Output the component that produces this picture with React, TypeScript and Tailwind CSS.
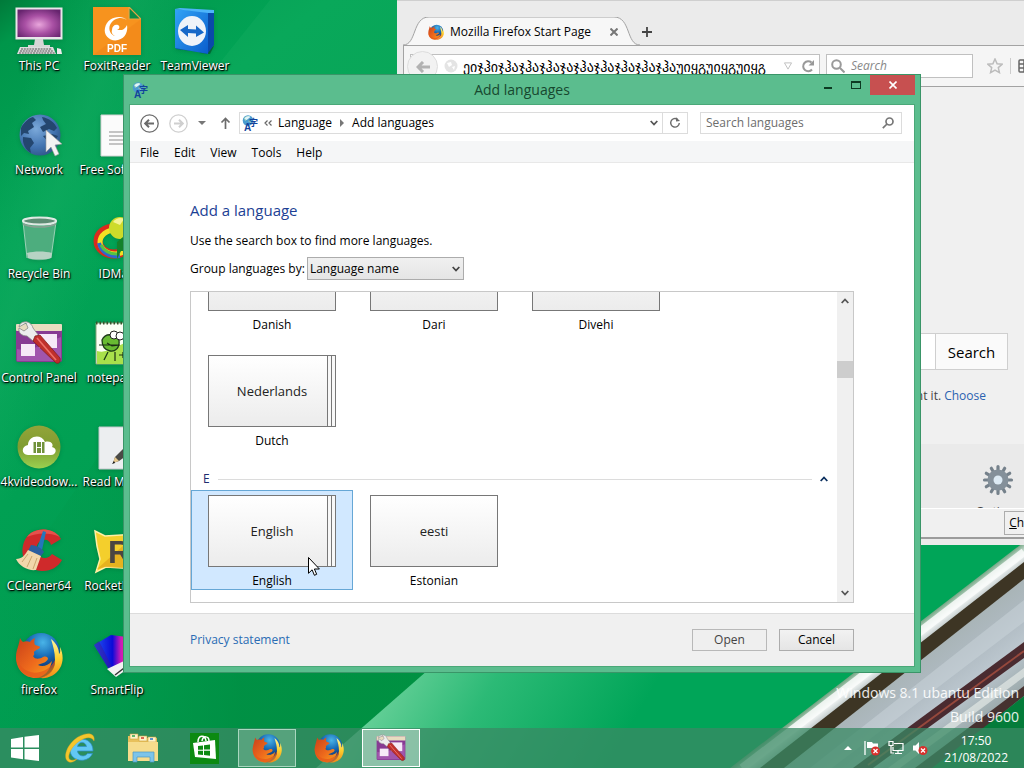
import React from "react";

type IconProps = { className?: string };

function FirefoxIcon({ className }: IconProps) {
  return (
    <svg viewBox="0 0 48 48" className={className} aria-hidden="true">
      <defs>
        <radialGradient id="fxGlobe" cx="55%" cy="25%" r="70%">
          <stop offset="0" stopColor="#49b4e8" />
          <stop offset="0.55" stopColor="#1769b4" />
          <stop offset="1" stopColor="#12336e" />
        </radialGradient>
        <linearGradient id="fxFox" x1="0" y1="0" x2="1" y2="1">
          <stop offset="0" stopColor="#c8401a" />
          <stop offset="0.55" stopColor="#ee6a1c" />
          <stop offset="1" stopColor="#f8a41c" />
        </linearGradient>
        <linearGradient id="fxTail" x1="0" y1="0" x2="0" y2="1">
          <stop offset="0" stopColor="#fff6a0" />
          <stop offset="0.5" stopColor="#ffcf2e" />
          <stop offset="1" stopColor="#f08a1a" />
        </linearGradient>
      </defs>
      <circle cx="26" cy="21" r="19" fill="url(#fxGlobe)" />
      <path d="M36 8c5 4 8 9 8 15 2-2 1-5 1-7 3 6 4 14 0 21-4 7-12 11-20 10 10-3 15-9 15-18 0-8-2-14-4-21z" fill="url(#fxTail)" />
      <path d="M5 7c1 2 2 3 3 4 2-1 5-1 7 0 1-2 3-3 5-4-1 3-1 5 0 7 2 1 5 1 5 2 0 2-5 3-6 5 0 2 1 3-1 4 2 4 7 3 10 1 3-1 5 0 5 2-2 4-6 4-10 6 4 2 10 1 14-4-2 10-8 16-16 17C9 47 1 38 1 26 1 19 4 15 5 7z" fill="url(#fxFox)" />
      <path d="M1 24c2 12 12 20 24 17 7-2 12-6 15-12 1 10-7 18-17 18C10 47 1 38 1 24z" fill="#e4571a" opacity="0.7" />
    </svg>
  );
}

function ControlPanelIcon({ className }: IconProps) {
  return (
    <svg viewBox="0 0 48 48" className={className} aria-hidden="true">
      <rect x="1" y="5" width="46" height="38" rx="2" fill="#873b93" />
      <rect x="1" y="5" width="46" height="7" rx="1" fill="#e8dcc0" />
      <path d="M2 30C15 34 35 22 46 18V42H2z" fill="#a155ad" />
      <rect x="24" y="15" width="18" height="14" fill="#f6e9f7" />
      <rect x="6" y="25" width="14" height="12" fill="#f6e9f7" />
      <path d="M4 8c0-3 3-5 5-5 4-1 8 2 9 6l6 8-6 5-6-5C7 17 3 14 4 9l5 3 4-3-2-5z" fill="#ededed" stroke="#888" strokeWidth="0.8" />
      <path d="M20 17l5-1 20 23c1 4-1 6-4 5L18 22z" fill="#c02f2c" stroke="#7c1c1a" strokeWidth="0.7" />
      <path d="M22 19l19 22" stroke="#ee7069" strokeWidth="1.6" />
    </svg>
  );
}

function LanguageIcon({ className }: IconProps) {
  return (
    <svg viewBox="0 0 16 16" className={className} aria-hidden="true">
      <circle cx="6" cy="5.500" r="5.300" fill="#4a9bd0" />
      <path d="M2 3c2-2 4-2 6-2L6 4 3 6zM6 6l3-1v3z" fill="#9ad6b8" />
      <path d="M2.500 3.500C4 1 7 .5 8.500 2L4.500 5z" fill="#e2f4fb" />
      <text x="2" y="15.500" fontFamily="'Liberation Sans', sans-serif" fontSize="10" fontWeight="700" fill="#12439c">A</text>
      <text x="7" y="11" fontFamily="'Noto Sans CJK JP', sans-serif" fontSize="9" fontWeight="700" fill="#12439c">字</text>
    </svg>
  );
}

function PcIcon({ className }: IconProps) {
  return (
    <svg viewBox="0 0 48 48" className={className} aria-hidden="true">
      <defs>
        <radialGradient id="pcScreen" cx="50%" cy="55%" r="65%">
          <stop offset="0" stopColor="#e9a6dc" />
          <stop offset="0.5" stopColor="#a950a4" />
          <stop offset="1" stopColor="#66246e" />
        </radialGradient>
      </defs>
      <rect x="0.5" y="0.5" width="47" height="32" fill="#e9e6ea" />
      <rect x="2.500" y="2.500" width="43" height="27.500" fill="url(#pcScreen)" />
      <path d="M20 32h8l1 6h-10zM13 38h22v2H13z" fill="#d6d6d6" />
      <path d="M5 40h33l3 7H2z" fill="#dedede" />
      <path d="M6 42h31M5 44h33M4 46h36" stroke="#555" strokeWidth="1.100" strokeDasharray="2 0.8" />
      <path d="M42 41l4 1 1 5h-5z" fill="#ececec" />
    </svg>
  );
}

function FoxitIcon({ className }: IconProps) {
  return (
    <svg viewBox="0 0 48 48" className={className} aria-hidden="true">
      <path d="M0 0h36l12 12v36H0z" fill="#f7931e" />
      <path d="M0 48L48 12v36z" fill="#ef8416" opacity="0.5" />
      <path d="M36 0l12 12H36z" fill="#0b8c45" stroke="#e7a545" strokeWidth="1.200" />
      <path d="M34 13c-6-6-20-3-22 8-2 8 6 14 13 12 8-2 10-9 9-15-3 6-6 5-10 5 3-1 3-4 1-5-3-1-6 1-6 5-1 3 1 5 3 6-4-1-7-6-5-11 3-7 12-9 17-5z" fill="#fff" />
      <text x="14" y="44.500" fontFamily="'Liberation Sans', sans-serif" fontSize="10" fontWeight="700" fill="#fff">PDF</text>
    </svg>
  );
}

function TeamViewerIcon({ className }: IconProps) {
  return (
    <svg viewBox="0 0 48 48" className={className} aria-hidden="true">
      <defs>
        <linearGradient id="tvBox" x1="0" y1="0" x2="1" y2="1">
          <stop offset="0" stopColor="#31a4f6" />
          <stop offset="1" stopColor="#0a5dcc" />
        </linearGradient>
      </defs>
      <path d="M28 46l15-7-4 8z" fill="#04391c" opacity="0.5" />
      <path d="M5 5L37 5l6 1v32l-6 8L5 42z" fill="#0a4aa9" />
      <path d="M4 2l33 3v42L4 41z" fill="url(#tvBox)" />
      <path d="M4 2l5-1 34 2v3l-6 0z" fill="#4db4fa" />
      <ellipse cx="21" cy="24" rx="14" ry="15" fill="#eef3f9" />
      <path d="M9 23l8-5v4l8 .5v-4l8 7-8 4.500v-3.500l-8-.5v4z" fill="#1668c8" />
    </svg>
  );
}

function NetworkIcon({ className }: IconProps) {
  return (
    <svg viewBox="0 0 48 48" className={className} aria-hidden="true">
      <defs>
        <radialGradient id="netGlobe" cx="40%" cy="35%" r="75%">
          <stop offset="0" stopColor="#7ba9da" />
          <stop offset="0.6" stopColor="#4273b0" />
          <stop offset="1" stopColor="#2b5080" />
        </radialGradient>
      </defs>
      <circle cx="25" cy="24" r="20.500" fill="url(#netGlobe)" />
      <path d="M6 17c3-6 8-10 12-11l3 3-4 3 2 4-6 4 1 3-5-1-3 3zM8 26l8 1 3 5-4 5 1 5c-5-3-9-9-8-16zM27 6c7 1 13 6 15 11l-3 3-5-2-6 3-3-5 6-3-3-4zM28 25l9-2 6 2-5 8-5-2z" fill="#24466f" />
      <path d="M31 19v22l5-5 4 9 4-2-4-9 7-1z" fill="#f3f3f3" stroke="#999" strokeWidth="0.6" />
    </svg>
  );
}

function DocumentIcon({ className }: IconProps) {
  return (
    <svg viewBox="0 0 48 48" className={className} aria-hidden="true">
      <path d="M8 4h34v41H8z" fill="#fbfbfb" stroke="#d4d4d4" />
      <path d="M16 21h20M16 25h20M16 29h20M16 33h20" stroke="#8d8d8d" />
    </svg>
  );
}

function RecycleIcon({ className }: IconProps) {
  return (
    <svg viewBox="0 0 48 48" className={className} aria-hidden="true">
      <path d="M8 6l4 37c6 3 18 3 24 0l5-37z" fill="#6bb791" opacity="0.7" />
      <path d="M8 7l4 36M41 7l-5 36" stroke="#b6dcc8" strokeWidth="0.8" />
      <path d="M12 38c7-2 18-2 25 0l-1 5c-5 2-18 2-23 0z" fill="#b7d3c4" />
      <ellipse cx="24.500" cy="6" rx="16.500" ry="3.500" fill="#5d8c74" stroke="#dfe9e3" strokeWidth="2.200" />
      <path d="M8 9c8 4 25 4 33 0" stroke="#88a093" strokeWidth="1.500" fill="none" />
    </svg>
  );
}

function IdmIcon({ className }: IconProps) {
  return (
    <svg viewBox="0 0 48 48" className={className} aria-hidden="true">
      <ellipse cx="21" cy="26" rx="16" ry="13" fill="none" stroke="#d92b1c" strokeWidth="9" />
      <ellipse cx="22" cy="27" rx="15" ry="12" fill="none" stroke="#f5e023" strokeWidth="5" />
      <path d="M6 28c2 9 10 14 21 13" fill="none" stroke="#2e67cf" strokeWidth="4" />
      <path d="M8 30c3 6 9 9 16 9" fill="none" stroke="#57c242" strokeWidth="3" />
      <circle cx="27" cy="13" r="11" fill="#cddb2a" />
      <path d="M20 7c3-4 8-5 11-3l-4 6z" fill="#f4f394" />
      <path d="M24 27l6-5V12h14v24H28l-4 8z" fill="#14822b" />
    </svg>
  );
}

function NotepadIcon({ className }: IconProps) {
  return (
    <svg viewBox="0 0 48 48" className={className} aria-hidden="true">
      <path d="M3 4h30l9 8v33H3z" fill="#fbfff4" stroke="#8aa57c" />
      <path d="M4 32c14 4 26-12 38-9v22H4z" fill="#a9e04b" />
      <path d="M3 4h32" stroke="#37542c" strokeWidth="3" strokeDasharray="1.500 2" />
      <path d="M9 21c3-7 12-7 17 0 1 8-4 12-9 11-5-1-8-5-8-11zm6 12l-4 8" fill="#68bb32" stroke="#1d3b16" strokeWidth="1.300" />
      <circle cx="21" cy="16" r="4" fill="#fff" stroke="#222" />
      <circle cx="27" cy="17" r="4" fill="#fff" stroke="#222" />
      <path d="M6 26h20M14 24l5 3 8-1M22 33v9M26 36h7M30 33v6" stroke="#1b2e14" strokeWidth="1.200" fill="none" />
    </svg>
  );
}

function FourKIcon({ className }: IconProps) {
  return (
    <svg viewBox="0 0 48 48" className={className} aria-hidden="true">
      <defs>
        <linearGradient id="cloudDisc" x1="0" y1="0" x2="0" y2="1">
          <stop offset="0" stopColor="#93a43a" />
          <stop offset="0.5" stopColor="#7f9c30" />
          <stop offset="1" stopColor="#9bd050" />
        </linearGradient>
      </defs>
      <circle cx="24" cy="24" r="21.500" fill="url(#cloudDisc)" />
      <path d="M13 32c-7 0-7-9 0-10 0-9 13-12 17-3 6-2 9 3 7 5 6 1 4 8-1 8z" fill="#fff" />
      <rect x="18.500" y="19" width="11" height="11" fill="#71923c" />
      <path d="M21.500 19v11M26.500 19v11M21.500 24.500h5" stroke="#fff" />
    </svg>
  );
}

function ReadMeIcon({ className }: IconProps) {
  return (
    <svg viewBox="0 0 48 48" className={className} aria-hidden="true">
      <path d="M6 4h36v42H6z" fill="#eceef0" stroke="#c2c7cb" />
      <path d="M20 40l2-6 12-12 6 6-14 10z" fill="#4a4a46" />
      <path d="M20 40l2-6 4 4z" fill="#e8c88c" />
      <path d="M19 41l3-1-1-2z" fill="#111" />
    </svg>
  );
}

function CCleanerIcon({ className }: IconProps) {
  return (
    <svg viewBox="0 0 48 48" className={className} aria-hidden="true">
      <path d="M46 12c-8-13-31-13-37 3-6 17 6 30 19 29 8 0 15-4 19-11l-10-6c-4 6-12 5-15-1-2-6 1-12 6-13 4-1 7 1 8 5z" fill="#cf2a2b" />
      <path d="M12 10c6-9 24-11 33 0-12-5-23-4-33 0z" fill="#e4524c" />
      <path d="M28 4l3 1-4 18-5-1z" fill="#2476bc" />
      <path d="M16 18c4 0 11 3 13 7l-3 4-13-5z" fill="#2b5f9f" />
      <path d="M13 23l13 6-5 14C13 44 4 39 1 32c6 0 9-4 12-9z" fill="#f1d7ab" />
      <path d="M13 27l-6 8M17 29l-5 11M22 31l-4 11" stroke="#cba66e" fill="none" />
    </svg>
  );
}

function RocketIcon({ className }: IconProps) {
  return (
    <svg viewBox="0 0 48 48" className={className} aria-hidden="true">
      <path d="M2 4l10 5 32-2-3 15 4 20-32-2-10 5 4-13-3-13z" fill="#f4cf2c" stroke="#fff0a4" strokeWidth="1.500" />
      <path d="M4 42L40 10l4 32-32-2z" fill="#e0a51a" opacity="0.7" />
      <text x="15" y="36" fontFamily="'Liberation Sans', sans-serif" fontSize="32" fontWeight="700" fill="#4a4642">R</text>
    </svg>
  );
}

function SmartFlipIcon({ className }: IconProps) {
  return (
    <svg viewBox="0 0 48 48" className={className} aria-hidden="true">
      <defs>
        <linearGradient id="flipFan" x1="0" y1="0" x2="1" y2="0">
          <stop offset="0" stopColor="#2458f0" />
          <stop offset="0.45" stopColor="#0a0ad8" />
          <stop offset="0.66" stopColor="#d01ab8" />
          <stop offset="1" stopColor="#e8306a" />
        </linearGradient>
      </defs>
      <path d="M1 14L18 4l24 3-8 26-17 7z" fill="url(#flipFan)" />
      <path d="M1 14l5-4 14 28-3 2z" fill="#3a1a9c" opacity="0.5" />
      <path d="M14 38l17-8 5 7-13 9z" fill="#f2f2f2" />
      <path d="M22 44l13-10" stroke="#333" strokeWidth="1.500" />
    </svg>
  );
}

function IeIcon({ className }: IconProps) {
  return (
    <svg viewBox="0 0 32 32" className={className} aria-hidden="true">
      <path d="M28 19H12.500c.5 5.500 7.500 6.500 10 2.500h5C23 32 5 30 5 17.500 5 4 28 2.500 28 19zM21.500 14.500c-1-5.500-8-5.500-9 0z" fill="#62c8f4" stroke="#2e8fcb" strokeWidth="0.7" />
      <path d="M29 9C31-1 18 0 9 8 0 16-2 28 4 30c3 1 6-1 8-3-9 4-10-2-6-9C11 9 25 1 29 9z" fill="#f4c62c" stroke="#d9a416" strokeWidth="0.4" />
    </svg>
  );
}

function FolderIcon({ className }: IconProps) {
  return (
    <svg viewBox="0 0 32 32" className={className} aria-hidden="true">
      <path d="M1 4h10l1 2h18v21H1z" fill="#e8c15c" />
      <path d="M3 2h8v5H3zM12 4h8v5h-8zM21 5h8v5h-8z" fill="#fff3c8" stroke="#cba13c" strokeWidth="0.6" />
      <path d="M5 4h3" stroke="#2fa24c" strokeWidth="1.500" />
      <path d="M14 6h3" stroke="#d23a2a" strokeWidth="1.500" />
      <path d="M23 7h3" stroke="#2a74c8" strokeWidth="1.500" />
      <path d="M1 10h30v19H1z" fill="#f6dc8c" />
      <path d="M6 20h21v10h-4v-5H10v5H6z" fill="#7cc4ea" stroke="#4a98c4" strokeWidth="0.7" />
    </svg>
  );
}

function StoreIcon({ className }: IconProps) {
  return (
    <svg viewBox="0 0 32 32" className={className} aria-hidden="true">
      <rect x="1" y="1" width="29" height="31" fill="#0c8a12" />
      <path d="M4 11l22-3 1 19-21-2z" fill="#fff" />
      <path d="M9 10c0-7 7-8 8-1M13 9c1-6 7-5 7 0" fill="none" stroke="#fff" strokeWidth="1.500" />
      <path d="M9 14l5-.6v4.300H9zM15 13.300l6-.7v5h-6zM9 18.700h5V23l-5-.5zM15 18.700h6v5l-6-.6z" fill="#0c8a12" />
    </svg>
  );
}

function WindowsIcon({ className }: IconProps) {
  return (
    <svg viewBox="0 0 28 26" className={className} aria-hidden="true">
      <path d="M0 4l12-2v10.500H0zM13.500 1.800L28 0v12.500H13.500zM0 14h12v10.300L0 22.500zM13.500 14H28v12l-14.500-1.700z" fill="#fff" />
    </svg>
  );
}

function Wallpaper() {
  return (
    <svg className="absolute inset-0 h-full w-full" viewBox="0 0 1024 768" preserveAspectRatio="xMaxYMax slice" aria-hidden="true">
      <defs>
        <linearGradient id="base" x1="0" y1="0" x2="1" y2="1">
          <stop offset="0" stopColor="#007a3a" />
          <stop offset="0.03" stopColor="#00964a" />
          <stop offset="0.16" stopColor="#02a456" />
          <stop offset="0.5" stopColor="#009c50" />
          <stop offset="1" stopColor="#008f40" />
        </linearGradient>
        <linearGradient id="sheen" gradientUnits="userSpaceOnUse" x1="380" y1="690" x2="580" y2="810">
          <stop offset="0" stopColor="#66d098" />
          <stop offset="0.4" stopColor="#2cba76" />
          <stop offset="1" stopColor="#00a558" />
        </linearGradient>
        <linearGradient id="shade" gradientUnits="userSpaceOnUse" x1="0" y1="700" x2="400" y2="700">
          <stop offset="0" stopColor="#009848" stopOpacity="0" />
          <stop offset="0.6" stopColor="#008a3e" />
          <stop offset="1" stopColor="#008c3c" />
        </linearGradient>
        <linearGradient id="streak" gradientUnits="userSpaceOnUse" x1="10" y1="120" x2="140" y2="170">
          <stop offset="0" stopColor="#14ac62" stopOpacity="0" />
          <stop offset="0.5" stopColor="#14ac62" stopOpacity="0.5" />
          <stop offset="1" stopColor="#14ac62" stopOpacity="0" />
        </linearGradient>
        <linearGradient id="tube" gradientUnits="userSpaceOnUse" x1="920" y1="620" x2="992" y2="713">
          <stop offset="0" stopColor="#5f9a72" />
          <stop offset="0.1" stopColor="#f1f5f4" />
          <stop offset="0.2" stopColor="#a7b3b4" />
          <stop offset="0.45" stopColor="#aeb9c0" />
          <stop offset="0.7" stopColor="#bcc7cf" />
          <stop offset="1" stopColor="#9caaac" />
        </linearGradient>
      </defs>
      <rect width="1024" height="768" fill="url(#base)" />
      <path d="M0 768V600L123 420V673H440L350 768z" fill="url(#shade)" opacity="0.6" />
      <path d="M0 0H200L60 500H0z" fill="url(#streak)" />
      <path d="M270 0L190 100H400V0z" fill="#1fb268" opacity="0.25" />
      <path d="M428 670L316 768H860L1024 560V540L600 560z" fill="url(#sheen)" />
      <path d="M1024 542L730 768H1024z" fill="url(#tube)" />
      <path d="M1024 552L742 768" stroke="#fafcfb" strokeWidth="8" opacity="0.85" />
      <path d="M1024 562L760 768H784L1024 579z" fill="#3d3524" />
      <path d="M1024 600L810 768H832L1024 622z" fill="#ccd5db" opacity="0.5" />
      <path d="M1024 642L853 768H873L1024 658z" fill="#4a2b30" />
      <path d="M1024 651L868 765" stroke="#96483c" strokeWidth="2" />
      <path d="M1024 668L888 768H900L1024 677z" fill="#e2e8e6" opacity="0.7" />
      <path d="M1024 686L915 768H935L1024 696z" fill="#463230" />
      <path d="M1024 696L932 768H1024z" fill="#047c3a" />
    </svg>
  );
}

const desktopItems: { label: string; Icon: (p: IconProps) => React.ReactElement }[] = [
  { label: "This PC", Icon: PcIcon },
  { label: "Network", Icon: NetworkIcon },
  { label: "Recycle Bin", Icon: RecycleIcon },
  { label: "Control Panel", Icon: ControlPanelIcon },
  { label: "4kvideodow...", Icon: FourKIcon },
  { label: "CCleaner64", Icon: CCleanerIcon },
  { label: "firefox", Icon: FirefoxIcon },
  { label: "FoxitReader", Icon: FoxitIcon },
  { label: "Free Softwa...", Icon: DocumentIcon },
  { label: "IDMan", Icon: IdmIcon },
  { label: "notepad++", Icon: NotepadIcon },
  { label: "Read Me file", Icon: ReadMeIcon },
  { label: "RocketDock", Icon: RocketIcon },
  { label: "SmartFlip", Icon: SmartFlipIcon },
  { label: "TeamViewer", Icon: TeamViewerIcon },
];

function DesktopIcons() {
  return (
    <div className="relative grid w-max auto-cols-[78px] grid-flow-col grid-rows-[repeat(7,104px)]">
      {desktopItems.map(({ label, Icon }) => (
        <button key={label} type="button" className="flex flex-col items-center gap-[3px] pt-[7px]">
          <Icon className="size-12 drop-shadow-sm" />
          <span className="text-[12px] leading-4 whitespace-nowrap text-white [text-shadow:1px_1px_1px_#000,0_1px_3px_#000]">{label}</span>
        </button>
      ))}
    </div>
  );
}

function FirefoxWindow() {
  return (
    <section aria-label="Mozilla Firefox" className="absolute top-0 -right-9 left-[397px] flex flex-col border-t border-[#cfcfcf] bg-[#ebebeb] pb-1.5 pl-1.5 text-black">
      <div className="flex h-11 items-end">
        <div className="relative flex h-7 w-[237px] items-center gap-1.5 pt-0.5 pl-[25px]">
          <svg className="absolute inset-0 h-full w-full" viewBox="0 0 237 28" preserveAspectRatio="none" aria-hidden="true">
            <path d="M0 28C14 28 9 0 26 0H211C228 0 223 28 237 28" fill="#f7f7f7" stroke="#a3a3a3" />
          </svg>
          <FirefoxIcon className="relative size-4" />
          <span className="relative flex-1 text-[12px] leading-4 whitespace-nowrap">Mozilla Firefox Start Page</span>
          <button type="button" aria-label="Close tab" className="relative mr-[22px]">
            <svg viewBox="0 0 8 8" className="size-2" stroke="#777" strokeWidth="2"><path d="M.5.5l7 7M7.500.5l-7 7" /></svg>
          </button>
        </div>
        <button type="button" aria-label="New tab" className="mb-2 ml-0.5">
          <svg viewBox="0 0 10 10" className="size-2.5" stroke="#444" strokeWidth="1.800"><path d="M5 0v10M0 5h10" /></svg>
        </button>
      </div>
      <div className="flex h-[42px] items-start border-y border-l border-[#a3a3a3] bg-[#f5f5f5] pt-2 pl-1.5">
        <div className="relative flex h-6 flex-1 items-center border border-[#c0c0c0] bg-white pl-[38px]">
          <span className="absolute -top-1 -left-1 flex size-[31px] items-center justify-center rounded-full border border-[#ddd] bg-[#f2f2f2]">
            <svg viewBox="0 0 14 12" className="h-3 w-3.5" fill="none" stroke="#b2b2b2" strokeWidth="3"><path d="M14 6H3M7 1L2 6l5 5" /></svg>
          </span>
          <svg viewBox="0 0 14 14" className="absolute left-[33px] size-3.5"><circle cx="7" cy="7" r="6.500" fill="#e4e4e4" /><path d="M3 4l4-1 1 3-3 2zM8 8l3-1-1 4z" fill="#fff" /></svg>
          <input aria-label="Address" readOnly value="ეიჯჰიჯჰაჯჰაჯჰაჯაჯჰაჯჰაჯჰაჯჰაჯჰაუიყგუიყგუიყგ" className="ml-[14px] w-0 flex-1 bg-transparent pt-0.5 font-['DejaVu_Sans',sans-serif] text-[14px] leading-5 outline-none" />
          <svg viewBox="0 0 10 9" className="mr-2 ml-1.5 h-2 w-2.5" fill="none" stroke="#bbb"><path d="M1 1h8L5 8z" /></svg>
          <svg viewBox="0 0 14 14" className="mr-1 size-3.5" fill="none" stroke="#999" strokeWidth="2"><path d="M11 10.500A5 5 0 1 1 10.500 3.500" /><path d="M13 1v5.500H7.500z" fill="#999" stroke="none" /></svg>
        </div>
        <div className="ml-1.5 flex h-6 w-[147px] items-center gap-1.5 border border-[#c0c0c0] bg-white pl-1">
          <svg viewBox="0 0 14 14" className="size-3.5" fill="none" stroke="#9a9a9a" strokeWidth="2"><circle cx="5.500" cy="5.500" r="4.300" /><path d="M9 9l4.500 4.500" /></svg>
          <input aria-label="Web search" placeholder="Search" className="w-0 flex-1 text-[12px] italic outline-none placeholder:text-[#888]" />
        </div>
        <svg viewBox="0 0 16 16" className="mt-1 ml-3.5 size-4" fill="none" stroke="#bcbcbc" strokeWidth="1.500"><path d="M8 1l2.100 4.700 5 .5-3.800 3.400 1.100 5L8 12l-4.400 2.600 1.100-5L.9 6.200l5-.5z" /></svg>
        <span className="mt-1 ml-[7px] h-4 w-px bg-[#ccc]" />
        <svg viewBox="0 0 16 16" className="mt-1 mr-[26px] ml-[7px] size-4" fill="none" stroke="#666" strokeWidth="1.500"><rect x="1" y="2" width="14" height="12" rx="1" /><path d="M1 6h14M1 10h14M6 2v12M11 2v12" /></svg>
      </div>
      <div className="flex flex-col items-end border-l border-[#ccc] bg-[#f0f0f0] pt-[246px] pr-[52px]">
        <div className="flex h-[37px] w-80 border border-[#cfcfcf] bg-white">
          <input aria-label="Start page search" className="w-0 flex-1 outline-none" />
          <button type="button" className="w-[72px] border-l border-[#cfcfcf] bg-[#fafafa] text-[15px] leading-5">Search</button>
        </div>
        <p className="pt-[18px] pr-[22px] pb-10 text-[12px] leading-4 text-[#444]">How you want it. <a href="#choose" className="text-[#2a62b0]">Choose</a></p>
      </div>
      <div className="flex h-16 items-start justify-end gap-14 overflow-hidden bg-[#eaeaea] pt-5 pr-[38px]">
        <span className="mt-1 size-7 rounded-full bg-[#7c8791]" />
        <div className="flex w-12 flex-col items-center gap-2">
          <svg viewBox="0 0 32 32" className="h-8 w-8 shrink-0" aria-hidden="true">
            <g stroke="#75818b" strokeWidth="3.200" strokeLinecap="round">
              <path d="M16 2.500v27M2.500 16h27M9.300 4.300l13.400 23.400M27.700 9.300L4.300 22.700M22.700 4.300L9.300 27.700M4.300 9.300l23.400 13.400" />
            </g>
            <circle cx="16" cy="16" r="10.500" fill="#84909a" />
            <circle cx="16" cy="16" r="4.500" fill="#dceaf4" />
          </svg>
          <span className="text-[12px] leading-4 text-[#444]">Options</span>
        </div>
      </div>
      <div className="flex h-[31px] items-center justify-end border-t border-b-2 border-t-white border-b-[#9c9c9c] bg-[#f0f0f0] pr-1">
        <button type="button" className="h-6 border border-[#acacac] bg-[#f0f0f0] px-1 text-[12px] leading-4"><u>C</u>hoose</button>
      </div>
    </section>
  );
}

type Lang = { native: string; name: string; stacked?: boolean; selected?: boolean };

function LanguageTile({ native, name, stacked, selected }: Lang) {
  return (
    <button
      type="button"
      aria-pressed={!!selected}
      className={
        selected
          ? "flex h-[100px] w-[162px] flex-col items-center border border-[#66a7d6] bg-[#d1e8ff] pt-1"
          : "flex h-[100px] w-[162px] flex-col items-center border border-transparent pt-1"
      }
    >
      <span className="relative flex h-[72px] w-32 shrink-0 items-center justify-center border border-[#777] bg-linear-to-b from-white to-[#ececec] text-[13px] leading-5 text-[#222]">
        {native}
        {stacked && <span className="absolute inset-y-0 right-0 w-2 border-l border-[#777] bg-[#f8f8f8]" />}
        {stacked && <span className="absolute inset-y-0 right-[3px] w-px bg-[#777]" />}
      </span>
      <span className="pt-1.5 text-[12px] leading-4">{name}</span>
    </button>
  );
}

function Chevron({ className, up }: { className?: string; up?: boolean }) {
  return (
    <svg viewBox="0 0 8 6" className={className} fill="none" stroke="currentColor" strokeWidth="1.800" aria-hidden="true">
      <path d={up ? "M.7 5L4 1.500 7.300 5" : "M.7 1L4 4.500 7.300 1"} />
    </svg>
  );
}

function AddLanguagesDialog() {
  const menus = ["File", "Edit", "View", "Tools", "Help"];
  return (
    <section aria-label="Add languages" className="absolute top-[74px] right-[103px] left-[123px] border border-[#3a9568] bg-[#5bbd8e] px-1.5 pb-1.5">
      <header className="relative flex h-[30px] items-center justify-center">
        <LanguageIcon className="absolute left-0.5 size-4" />
        <h1 className="text-[14px] leading-5 text-[#17482f]">Add languages</h1>
        <div className="absolute top-0 -right-px flex h-5 items-stretch text-[#0c3a22]">
          <button type="button" aria-label="Minimize" className="flex w-7 items-center justify-center">
            <span className="mt-1.5 h-0.5 w-2 bg-[#0c3a22]" />
          </button>
          <button type="button" aria-label="Maximize" className="flex w-7 items-center justify-center">
            <span className="h-2 w-2.5 border border-t-2 border-[#0c3a22]" />
          </button>
          <button type="button" aria-label="Close" className="flex w-[45px] items-center justify-center bg-[#c75050]">
            <svg viewBox="0 0 8 8" className="size-2" stroke="#fff" strokeWidth="1.600"><path d="M.5.5l7 7M7.500.5l-7 7" /></svg>
          </button>
        </div>
      </header>
      <div className="bg-white text-black outline outline-[#4aa878]">
        <nav aria-label="Location" className="flex h-9 items-center pr-3 pl-2.5">
          <button type="button" aria-label="Back" className="mr-2.5">
            <svg viewBox="0 0 19 19" className="size-[19px]" fill="none" stroke="#6b6b6b"><circle cx="9.500" cy="9.500" r="8.700" strokeWidth="1.300" /><path d="M14 9.500H5.500M9 5.700L5.200 9.500 9 13.300" strokeWidth="2" /></svg>
          </button>
          <button type="button" aria-label="Forward" className="mr-2.5">
            <svg viewBox="0 0 19 19" className="size-[19px]" fill="none" stroke="#cfcfcf"><circle cx="9.500" cy="9.500" r="8.700" strokeWidth="1.300" /><path d="M5 9.500h8.500M10 5.700l3.800 3.800L10 13.300" strokeWidth="2" /></svg>
          </button>
          <button type="button" aria-label="Recent locations" className="mr-3.5">
            <svg viewBox="0 0 8 4" className="h-1 w-2" fill="#777"><path d="M0 0h8L4 4z" /></svg>
          </button>
          <button type="button" aria-label="Up" className="mr-2">
            <svg viewBox="0 0 11 12" className="h-3 w-[11px]" fill="none" stroke="#6b6b6b" strokeWidth="1.700"><path d="M5.500 12V1.500M1.500 5.500l4-4 4 4" /></svg>
          </button>
          <div className="flex h-[22px] flex-1 items-center border border-[#dcdcdc] text-[12px] leading-4">
            <LanguageIcon className="ml-0.5 size-4" />
            <svg viewBox="0 0 8 6" className="mx-1.5 h-1.5 w-2" fill="none" stroke="#666" strokeWidth="1.200"><path d="M3.500.5L1 3l2.500 2.500M7.500.5L5 3l2.500 2.500" /></svg>
            <span>Language</span>
            <svg viewBox="0 0 4 8" className="mx-2 h-2 w-1" fill="#777"><path d="M0 0l4 4-4 4z" /></svg>
            <span className="flex-1">Add languages</span>
            <Chevron className="mr-1 h-1.5 w-2 text-[#555]" />
            <button type="button" aria-label="Refresh" className="flex h-full w-[25px] items-center justify-center border-l border-[#dcdcdc]">
              <svg viewBox="0 0 12 12" className="size-3" fill="none" stroke="#6b6b6b" strokeWidth="1.400"><path d="M8.500 2.300A4.300 4.300 0 1 0 10.300 6" /><path d="M7 .2v4.300l4-.5z" fill="#6b6b6b" stroke="none" /></svg>
            </button>
          </div>
          <label className="ml-3 flex h-[22px] w-[202px] items-center border border-[#dcdcdc] pr-[7px] pl-[5px]">
            <input aria-label="Search languages" placeholder="Search languages" className="w-0 flex-1 text-[12px] leading-4 outline-none placeholder:text-[#6d6d6d]" />
            <svg viewBox="0 0 12 12" className="size-3" fill="none" stroke="#777" strokeWidth="1.700"><circle cx="7.500" cy="4.500" r="3.500" /><path d="M5 7L.8 11.200" /></svg>
          </label>
        </nav>
        <div className="flex h-[22px] items-center gap-[15px] border-b border-[#e8e8e8] bg-[#f5f6f7] pt-[3px] pl-2.5 text-[12px] leading-4">
          {menus.map((m) => (
            <button key={m} type="button">{m}</button>
          ))}
        </div>
        <main className="px-[60px] pt-[35px] pb-2.5">
          <h2 className="text-[15px] leading-6 text-[#1c3f94]">Add a language</h2>
          <p className="pt-[11px] text-[12px] leading-4">Use the search box to find more languages.</p>
          <div className="flex items-center pt-2 text-[12px] leading-4">
            <label htmlFor="group-by" className="mr-0.5">Group languages by:</label>
            <span className="relative flex h-[23px] w-[157px] items-center">
              <select id="group-by" className="h-full w-full appearance-none border border-[#acacac] bg-linear-to-b from-[#f0f0f0] to-[#e5e5e5] pl-0.5">
                <option>Language name</option>
                <option>Writing system</option>
              </select>
              <Chevron className="pointer-events-none absolute right-1 h-1.5 w-2 text-[#444]" />
            </span>
          </div>
          <div className="mt-[11px] flex h-[312px] border border-[#c8c8c8]">
            <div className="flex flex-1 flex-col justify-end overflow-hidden pb-3">
              <div className="flex shrink-0 flex-wrap gap-y-4">
                <LanguageTile native="dansk" name="Danish" />
                <LanguageTile native="درى" name="Dari" />
                <LanguageTile native="ދިވެހިބަސް" name="Divehi" />
                <LanguageTile native="Nederlands" name="Dutch" stacked />
              </div>
              <div className="flex shrink-0 items-center gap-2 pt-[21px] pr-[9px] pb-[3px] pl-3">
                <h3 className="text-[12px] leading-4 text-[#1f2c6e]">E</h3>
                <span className="h-px flex-1 bg-[#dcdcdc]" />
                <button type="button" aria-label="Collapse E"><Chevron up className="h-1.5 w-2 text-[#0b2f5e]" /></button>
              </div>
              <div className="flex shrink-0 flex-wrap">
                <LanguageTile native="English" name="English" stacked selected />
                <LanguageTile native="eesti" name="Estonian" />
              </div>
            </div>
            <div className="flex w-4 flex-col items-center bg-[#f0f0f0] py-1.5">
              <Chevron up className="h-1.5 w-2 text-[#555]" />
              <span className="mt-[57px] h-[17px] w-full bg-[#cdcdcd]" />
              <Chevron className="mt-auto h-1.5 w-2 text-[#555]" />
            </div>
          </div>
        </main>
        <footer className="flex h-[53px] items-center border-t border-[#dcdcdc] bg-[#f0f0f0] px-[60px] text-[12px] leading-4">
          <a href="#privacy" className="flex-1 text-[#2a6cb4]">Privacy statement</a>
          <button type="button" className="mr-3 h-[22px] w-[75px] border border-[#b8b8b8] bg-[#efefef] text-[#444]">Open</button>
          <button type="button" className="h-[22px] w-[75px] border border-[#acacac] bg-linear-to-b from-[#f2f2f2] to-[#e5e5e5]">Cancel</button>
        </footer>
      </div>
    </section>
  );
}

function Taskbar() {
  return (
    <footer className="absolute inset-x-0 bottom-0 flex h-10 items-stretch bg-[#3a8a64]/75 text-white">
      <button type="button" aria-label="Start" className="flex w-[50px] items-center justify-center"><WindowsIcon className="h-[26px] w-7" /></button>
      <button type="button" aria-label="Internet Explorer" className="flex w-[62px] items-center justify-center"><IeIcon className="size-8" /></button>
      <button type="button" aria-label="File Explorer" className="flex w-[62px] items-center justify-center"><FolderIcon className="size-8" /></button>
      <button type="button" aria-label="Store" className="flex w-[62px] items-center justify-center"><StoreIcon className="size-8" /></button>
      <button type="button" aria-label="Firefox window" className="mx-0.5 my-px flex w-[58px] items-center justify-center border border-[#a9d6bf] bg-white/20"><FirefoxIcon className="size-[30px]" /></button>
      <button type="button" aria-label="Firefox" className="flex w-[62px] items-center justify-center"><FirefoxIcon className="size-[30px]" /></button>
      <button type="button" aria-label="Control Panel" className="mx-0.5 my-px flex w-[58px] items-center justify-center border border-white bg-white/40"><ControlPanelIcon className="size-[30px]" /></button>
      <div className="ml-auto flex items-center gap-2 pr-4">
        <svg viewBox="0 0 8 4" className="mr-1 h-1 w-2" fill="#fff" aria-hidden="true"><path d="M0 4h8L4 0z" /></svg>
        <svg viewBox="0 0 16 16" className="size-4" aria-hidden="true"><path d="M1 1v14" stroke="#fff" strokeWidth="1.300" /><path d="M3 2h5l1 1.500h5v6H9L8 8H3z" fill="#fff" /><circle cx="11.500" cy="11" r="4.500" fill="#d8302c" /><path d="M9.500 9l4 4M13.500 9l-4 4" stroke="#fff" strokeWidth="1.300" /></svg>
        <svg viewBox="0 0 16 16" className="size-4" fill="none" stroke="#fff" strokeWidth="1.200" aria-hidden="true"><path d="M6 3.500h9v7H5V7M7 13.500h7M10 10.500v3M1 1.500h4v4H1zM3 5.500V13h3" /></svg>
        <svg viewBox="0 0 16 16" className="size-4" aria-hidden="true"><path d="M1 5.500h2.500L7 2v12L3.500 10.500H1z" fill="#fff" /><circle cx="11" cy="10.500" r="4.500" fill="#d8302c" /><path d="M9 8.500l4 4M13 8.500l-4 4" stroke="#fff" strokeWidth="1.300" /></svg>
        <time className="ml-2 flex flex-col items-center pt-0.5 text-[12px] leading-[17px]">
          <span>17:50</span>
          <span>21/08/2022</span>
        </time>
      </div>
    </footer>
  );
}

export default function App() {
  return (
    <div className="relative h-screen w-full overflow-hidden bg-[#009c50] font-['Open_Sans','Noto_Sans',sans-serif]">
      <Wallpaper />
      <DesktopIcons />
      <FirefoxWindow />
      <p className="absolute right-[5px] bottom-[39px] text-right text-[14px] leading-6 text-white/90">
        Windows 8.1 ubantu Edition
        <br />
        Build 9600
      </p>
      <AddLanguagesDialog />
      <Taskbar />
      <svg viewBox="0 0 12 19" className="absolute top-[557px] left-[308px] h-[19px] w-3" aria-hidden="true">
        <path d="M.5.5v15.800l3.600-3.500 2.300 5.500 2.300-1-2.300-5.300h5z" fill="#fff" stroke="#000" />
      </svg>
    </div>
  );
}
